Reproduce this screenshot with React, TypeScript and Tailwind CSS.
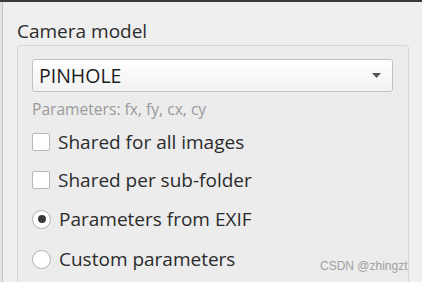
import React from "react";

const font = { fontFamily: '"Open Sans", "Noto Sans", sans-serif' };

function Check({ label }: { label: string }) {
  return (
    <div className="flex items-center h-[38px]">
      <div className="w-[18px] h-[18px] bg-white border border-[#b8b8b8] rounded-[2px] shrink-0" />
      <span className="ml-[8px] text-[19px] text-[#2b2b2b] leading-none">{label}</span>
    </div>
  );
}

function Radio({ label, checked }: { label: string; checked?: boolean }) {
  return (
    <div className="flex items-center h-[40px]">
      <div className="w-[19px] h-[19px] rounded-full bg-white border border-[#b0b0b0] shrink-0 flex items-center justify-center">
        {checked && <div className="w-[8px] h-[8px] rounded-full bg-[#3a3a3a]" />}
      </div>
      <span className="ml-[8px] text-[19px] text-[#2b2b2b] leading-none">{label}</span>
    </div>
  );
}

export default function App() {
  return (
    <div className="w-[422px] h-[282px] bg-[#efefef] relative overflow-hidden" style={font}>
      <div className="h-[2px] bg-[#3a3a3a]" />
      <div className="flex h-[280px]">
        <div className="w-[3px] bg-[#e2e2e2] border-r border-[#c8c8c8]" />
        <div className="flex-1 pl-[14px]">
          <div className="h-[43px] pt-[17px] text-[19px] leading-[24px] text-[#2b2b2b]">Camera model</div>
          <div className="w-[392px] h-[260px] border border-[#d6d6d6] rounded-[3px] bg-[#ececec] pl-[14px] pt-[13px]">
            <div className="w-[361px] h-[33px] rounded-[3px] border border-[#c2c2c2] bg-gradient-to-b from-[#ffffff] to-[#f2f2f2] flex items-center pl-[6px] pr-[11px]">
              <span className="flex-1 text-[19.5px] text-[#1e1e1e] leading-none">PINHOLE</span>
              <svg width="9" height="5" viewBox="0 0 9 5">
                <path d="M0 0 H9 L4.5 5 Z" fill="#555555" />
              </svg>
            </div>
            <div className="h-[26px] flex items-end text-[15.6px] leading-none text-[#9a9a9a]">Parameters: fx, fy, cx, cy</div>
            <div className="mt-[5px]">
              <Check label="Shared for all images" />
              <Check label="Shared per sub-folder" />
              <Radio label="Parameters from EXIF" checked />
              <Radio label="Custom parameters" />
            </div>
          </div>
        </div>
      </div>
      <div
        className="absolute left-[320px] top-[258px] text-[12px] text-[#a0a0a0] leading-[16px]"
        style={{ fontFamily: '"Liberation Sans", sans-serif' }}
      >
        CSDN @zhingzt
      </div>
    </div>
  );
}
